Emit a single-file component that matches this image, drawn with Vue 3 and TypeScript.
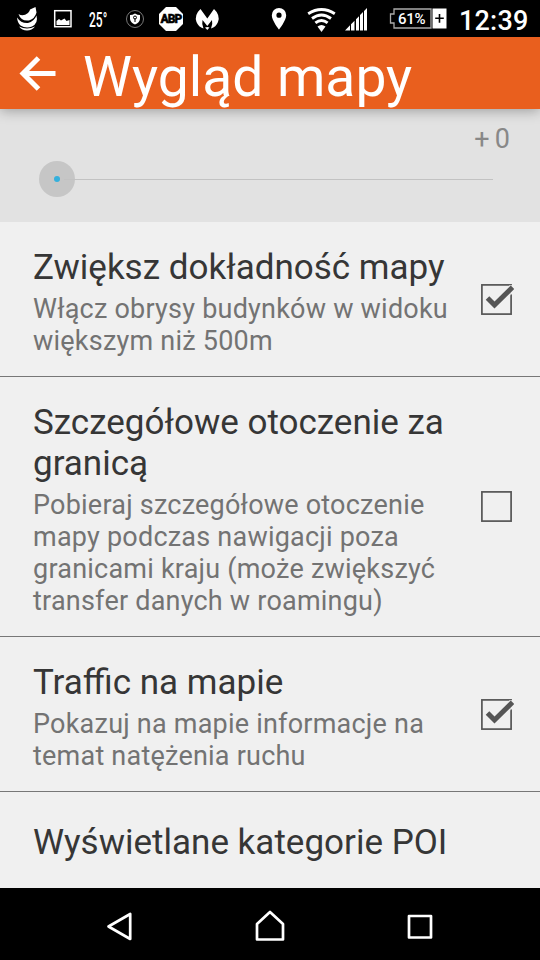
<script setup lang="ts">
interface Setting {
  title: string[]
  summary: string[]
  checked?: boolean
}

const settings: Setting[] = [
  {
    title: ['Zwiększ dokładność mapy'],
    summary: ['Włącz obrysy budynków w widoku', 'większym niż 500m'],
    checked: true,
  },
  {
    title: ['Szczegółowe otoczenie za', 'granicą'],
    summary: [
      'Pobieraj szczegółowe otoczenie',
      'mapy podczas nawigacji poza',
      'granicami kraju (może zwiększyć',
      'transfer danych w roamingu)',
    ],
    checked: false,
  },
  {
    title: ['Traffic na mapie'],
    summary: ['Pokazuj na mapie informacje na', 'temat natężenia ruchu'],
    checked: true,
  },
  { title: ['Wyświetlane kategorie POI'], summary: [] },
]
</script>

<template>
  <div class="screen">
    <header class="status">
      <svg class="status-icons" width="400" height="37" viewBox="0 0 400 37" fill="#fff">
        <!-- swirl -->
        <path d="M18.500 14Q23 17 28 13Q30 10.500 30 9.500L35.500 7L36.500 12.500Q35 18.500 29 20.500Q21 21.500 18.500 14Z" />
        <path d="M17 17.500Q21 23.500 28 23Q34 21.500 36.500 15.500Q38.500 23 32 26.500Q26 29 20.500 25.500Q17.500 23 17 17.500Z" />
        <path d="M19 26.500Q27 30.500 35 26.500Q32 30.500 27 30.500Q22 30.500 19 26.500Z" />
        <!-- picture -->
        <rect x="54.700" y="10.700" width="16.300" height="16" fill="none" stroke="#fff" stroke-width="1.500" />
        <path d="M56.500 25V21L59 19L61 20.500L64.500 18.500L66.500 21L69.500 20V25Z" />
        <!-- shield -->
        <circle cx="135" cy="19" r="8.500" fill="none" stroke="#777" stroke-width="1" />
        <path d="M135 13.500Q137.500 15 140 15V19Q139.500 22.500 135 24.500Q130.500 22.500 130 19V15Q132.500 15 135 13.500Z" />
        <circle cx="135" cy="17.500" r="1.500" fill="none" stroke="#000" />
        <path d="M135 18.500V22" stroke="#000" />
        <!-- octagon -->
        <path d="M166 7H176L183 14V24L176 31H166L159 24V14Z" />
        <!-- winged M -->
        <path d="M200.500 9Q194 15 196.500 22Q198.500 27 203.500 28.500Q201.500 24.500 202.500 20L207.300 26L212 20Q213 24.500 211 28.500Q216 27 218 22Q220.500 15 214 9L207.300 18.500Z" />
        <path d="M205 27.500L207.300 27L209.500 27.500L207.300 30Z" />
        <!-- location -->
        <path fill-rule="evenodd" d="M279 8a7.200 7.200 0 0 1 7.200 7.200C286.200 20.500 279 29.500 279 29.500S271.800 20.500 271.800 15.200A7.200 7.200 0 0 1 279 8ZM279 12.600a2.600 2.600 0 1 0 0 5.200a2.600 2.600 0 1 0 0-5.200Z" />
        <!-- wifi -->
        <g fill="none" stroke="#fff" stroke-width="2.900">
          <path d="M308.200 13.700Q321.500 5.300 334.800 13.700" />
          <path d="M312 18.500Q321.500 11.500 331 18.500" />
          <path d="M315.400 22.900Q321.500 18 327.600 22.900" />
        </g>
        <path d="M317.500 26.500Q321.500 23.500 325.500 26.500L321.500 32Z" />
        <!-- signal -->
        <path d="M345 30.500L350 25.300V30.500ZM351 24.300L354.500 20.700V30.500H351ZM356 19.300L359 16.200V30.500H356ZM360 15.100L363 12V30.500H360ZM364 11L367 8V30.500H364Z" />
      </svg>
      <span class="temp">25°</span>
      <span class="abp">ABP</span>
      <div class="battery">
        <svg width="58" height="22" viewBox="0 0 58 22">
          <path d="M5 1H42V20H5V15H1.500V6H5Z" fill="none" stroke="#aaa" stroke-width="1.300" />
          <rect x="43.500" y="0.500" width="14" height="20" fill="#fff" />
          <path d="M46.200 10.300H54.800M50.500 6V14.700" stroke="#000" stroke-width="1.600" />
        </svg>
        <span class="percent">61%</span>
      </div>
      <time class="clock">12:39</time>
    </header>

    <div class="appbar">
      <svg class="back" width="38" height="36" viewBox="0 0 38 36" fill="none" stroke="#fff" stroke-width="5">
        <path d="M36.500 18.500H5M19.500 3L4 18.500L19.500 34" />
      </svg>
      <h1>Wygląd mapy</h1>
    </div>

    <section class="slider-panel">
      <span class="value">+ 0</span>
      <div class="slider">
        <div class="thumb"><i></i></div>
        <div class="track"></div>
      </div>
    </section>

    <main class="list">
      <div v-for="item in settings" :key="item.title[0]" class="row">
        <div class="texts">
          <div v-for="line in item.title" :key="line" class="title">{{ line }}</div>
          <div v-if="item.summary.length" class="summary">
            <div v-for="line in item.summary" :key="line">{{ line }}</div>
          </div>
        </div>
        <svg v-if="item.checked !== undefined" class="check" width="34" height="34" viewBox="0 0 34 34" fill="none" stroke="#555">
          <rect v-if="!item.checked" x="1.900" y="1.900" width="29.200" height="29.200" stroke-width="1.700" />
          <template v-else>
            <rect x="1.900" y="2.900" width="29.200" height="29.200" stroke-width="1.700" />
            <path d="M30 4L33 4V10L31 12Z" fill="#f0f0f0" stroke="#f0f0f0" stroke-width="1.500" />
            <path d="M7.500 16L14.500 23L32.500 5.300" stroke-width="5" />
          </template>
        </svg>
      </div>
    </main>

    <nav class="navbar">
      <svg width="34" height="34" viewBox="0 0 34 34"><path d="M5.500 16.500L27.200 4V29Z" /></svg>
      <svg width="34" height="34" viewBox="0 0 34 34"><path d="M4 29.500V14L17 2L30 14V29.500Z" /></svg>
      <svg width="34" height="34" viewBox="0 0 34 34"><path d="M6 6H28V27.500H6Z" /></svg>
    </nav>
  </div>
</template>

<style>
body {
  margin: 0;
}
</style>

<style scoped>
.screen {
  width: 540px;
  height: 960px;
  display: flex;
  flex-direction: column;
  overflow: hidden;
  background: #f0f0f0;
  font-family: Roboto, "Noto Sans", sans-serif;
}
.status {
  position: relative;
  height: 37px;
  flex: none;
  background: #000;
  color: #fff;
}
.status-icons {
  display: block;
}
.temp,
.abp,
.battery,
.clock {
  position: absolute;
}
.temp {
  left: 89px;
  top: 9px;
  font-size: 20px;
  font-weight: 500;
  line-height: 22px;
  transform: scaleX(0.600);
  transform-origin: left;
}
.abp {
  left: 160.500px;
  top: 12px;
  color: #000;
  font: 900 12px/14px Roboto, sans-serif;
  letter-spacing: -0.900px;
  -webkit-text-stroke: 0.400px #000;
}
.battery {
  left: 389px;
  top: 8px;
}
.battery svg {
  display: block;
}
.percent {
  position: absolute;
  left: 9px;
  top: 2px;
  font-size: 15px;
  font-weight: 500;
  line-height: 18px;
  letter-spacing: -0.300px;
}
.clock {
  left: 459px;
  top: 5px;
  font-size: 27px;
  line-height: 32px;
  font-weight: 500;
  letter-spacing: 0.200px;
}
.appbar {
  flex: none;
  height: 72px;
  display: flex;
  align-items: center;
  background: #e95f1e;
  position: relative;
  z-index: 1;
  box-shadow: 0 2px 12px rgba(0, 0, 0, 0.300);
}
.back {
  margin-left: 19px;
}
h1 {
  margin: 7px 0 0 26px;
  color: #fff;
  font-weight: 400;
  font-size: 55.200px;
  line-height: 64px;
  white-space: nowrap;
}
.slider-panel {
  flex: none;
  height: 113px;
  box-sizing: border-box;
  padding: 14px 30px 0 39px;
  background: #e2e2e2;
  display: flex;
  flex-direction: column;
}
.value {
  align-self: flex-end;
  color: #888;
  font-size: 27px;
  line-height: 32px;
  word-spacing: -1.500px;
}
.slider {
  display: flex;
  align-items: center;
  margin-top: 6px;
}
.thumb {
  width: 36px;
  height: 36px;
  border-radius: 50%;
  background: #c6c6c6;
  display: grid;
  place-items: center;
}
.thumb i {
  width: 6px;
  height: 6px;
  border-radius: 50%;
  background: #35b0dc;
}
.track {
  width: 429px;
  height: 1px;
  margin-left: -11px;
  background: #c2c2c2;
}
.list {
  flex: 1;
  overflow: hidden;
}
.row {
  display: flex;
  align-items: center;
  justify-content: space-between;
  padding: 25px 26px 19px 33px;
  border-bottom: 1px solid #777;
}
.row:last-child {
  padding-top: 30px;
  border-bottom: 0;
}
.texts {
  white-space: nowrap;
}
.title {
  color: #363636;
  font-size: 35px;
  line-height: 41px;
}
.summary {
  margin-top: 5px;
  color: #737373;
  font-size: 27px;
  line-height: 32px;
  letter-spacing: 0.220px;
}
.check {
  flex: none;
  position: relative;
  top: -3px;
}
.navbar {
  flex: none;
  height: 72px;
  box-sizing: border-box;
  display: flex;
  justify-content: space-between;
  padding: 5px 103px 0;
  align-items: center;
  background: #000;
}
.navbar path {
  fill: none;
  stroke: #fff;
  stroke-width: 2.700;
  stroke-linejoin: round;
}
</style>
